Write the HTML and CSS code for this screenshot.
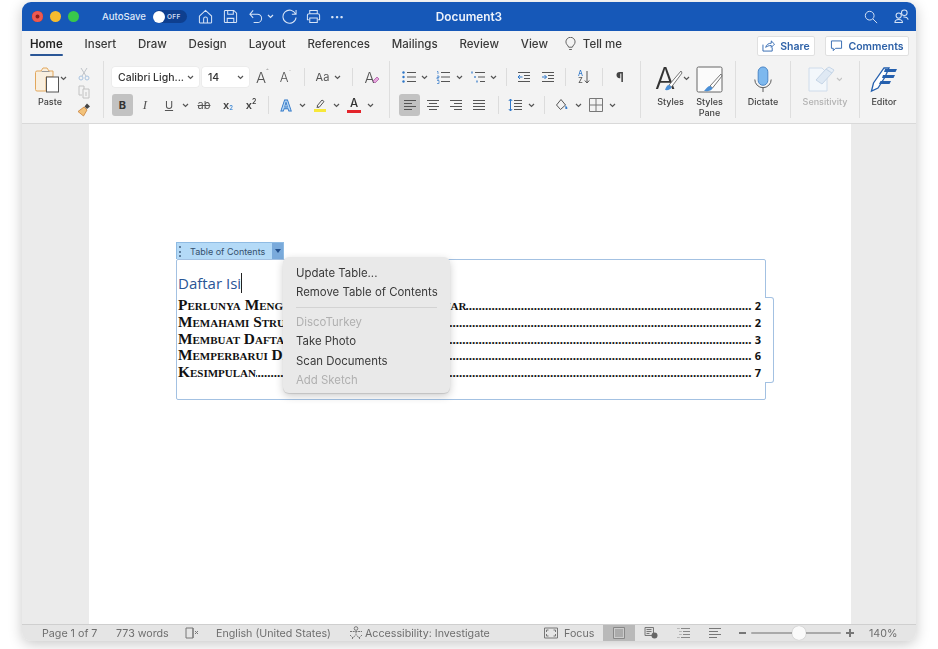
FILE: index.html
```html
<!DOCTYPE html>
<html lang="en">
<head>
<meta charset="utf-8">
<title>Document3</title>
<link rel="stylesheet" href="styles.css">
</head>
<body>
<svg class="defs" aria-hidden="true">
  <symbol id="chev" viewBox="0 0 7 5"><path d="M1 1l2.5 2.5L6 1" fill="none" stroke="#555" stroke-width="1.2"/></symbol>
  <symbol id="lines-l" viewBox="0 0 14 14"><path d="M1 2.5h12M1 5.5h8M1 8.5h12M1 11.5h8" stroke="#555" fill="none"/></symbol>
  <symbol id="lines-c" viewBox="0 0 14 14"><path d="M1 2.5h12M3 5.500h8M1 8.5h12M3 11.5h8" stroke="#555" fill="none"/></symbol>
  <symbol id="lines-r" viewBox="0 0 14 14"><path d="M1 2.5h12M5 5.5h8M1 8.5h12M5 11.5h8" stroke="#555" fill="none"/></symbol>
  <symbol id="lines-j" viewBox="0 0 14 14"><path d="M1 2.500h12M1 5.500h12M1 8.500h12M1 11.5h12" stroke="#555" fill="none"/></symbol>
</svg>
<div class="window">
  <header class="titlebar">
    <div class="lights"><i class="light red"></i><i class="light yellow"></i><i class="light green"></i></div>
    <span class="autosave">AutoSave</span>
    <span class="toggle"><i class="knob"></i><b>OFF</b></span>
    <svg class="tt t-home" viewBox="0 0 16 16"><path d="M1.500 7.500L8 1.500l6.500 6V14a1 1 0 0 1-1 1h-11a1 1 0 0 1-1-1zM6 15v-4.500a2 2 0 0 1 4 0V15"/></svg>
    <svg class="tt t-next" viewBox="0 0 16 16"><path d="M2.500 1.500h9l3 3v9a1 1 0 0 1-1 1h-11a1 1 0 0 1-1-1v-11a1 1 0 0 1 1-1zM5 1.500v4h6v-4M4.500 14.500V10h7v4.500"/></svg>
    <svg class="tt t-next" viewBox="0 0 16 16"><path d="M5.500 1.500L2 5.500l3.500 4M2 5.500h8a4.500 4.500 0 0 1 0 9H6"/></svg>
    <svg class="tchev" viewBox="0 0 7 5"><path d="M1 1l2.500 2.500L6 1"/></svg>
    <svg class="tt t-redo" viewBox="0 0 16 16"><path d="M14.500 5.500A7 7 0 1 0 15 9M15 1v4.500h-4.500"/></svg>
    <svg class="tt t-print" viewBox="0 0 16 16"><path d="M4 5.500V1.500h8v4M3 11.500H1.500V7a2 2 0 0 1 2-2h9a2 2 0 0 1 2 2v4.500H13M4 9.500h8v5H4z"/></svg>
    <span class="more">···</span>
    <span class="doc-title">Document3</span>
    <svg class="tt t-search" viewBox="0 0 16 16"><circle cx="6.500" cy="6.500" r="5"/><path d="M10.200 10.200L15 15"/></svg>
    <svg class="tt t-people" viewBox="0 0 16 16"><circle cx="11" cy="4" r="3"/><circle cx="5" cy="7" r="2.800"/><path d="M1 14.500c0-2 2-3.200 4-3.200s4 1.200 4 3.200zM10 8.500c2.500-.3 5 .8 5 3"/></svg>
  </header>

  <nav class="tabs">
    <span class="tab active">Home</span>
    <span class="tab">Insert</span>
    <span class="tab">Draw</span>
    <span class="tab">Design</span>
    <span class="tab">Layout</span>
    <span class="tab">References</span>
    <span class="tab">Mailings</span>
    <span class="tab">Review</span>
    <span class="tab">View</span>
    <span class="tell">
      <svg class="bulb" viewBox="0 0 12 15"><path d="M4 11C3.500 9 1 8 1 5.200a5 5 0 0 1 10 0C11 8 8.500 9 8 11zM4.500 13.500h3" fill="none" stroke="#555"/></svg>
      <span class="tab">Tell me</span>
    </span>
    <span class="btn share">
      <svg class="btn-ic" viewBox="0 0 14 13"><path d="M1 5v7h10V8M4 8c.5-3 3-4.500 6-4.500V1l3.500 3.500L10 8V6C7.500 6 5.500 6.500 4 8z" fill="none" stroke="#2f66b0"/></svg>Share</span>
    <span class="btn comments">
      <svg class="btn-ic" viewBox="0 0 14 13"><path d="M1.500 1h11v8H6L3.500 11.500V9h-2z" fill="none" stroke="#2f66b0"/></svg>Comments</span>
  </nav>

  <section class="ribbon">
    <div class="group g-paste">
      <div class="big paste-col">
        <div class="big-ic">
          <svg class="paste-ic" viewBox="0 0 26 27"><path d="M3 5h4l2-3h4l2 3h4v6H12v14H3a1.500 1.500 0 0 1-1.500-1.500V6.500A1.500 1.500 0 0 1 3 5z" fill="#f9efdf" stroke="#e2a75c"/><path d="M7.500 5.500h8" stroke="#999"/><rect x="12.500" y="11" width="12" height="15" fill="#fff" stroke="#555"/></svg>
          <svg class="chev paste-chev"><use href="#chev"/></svg>
        </div>
        <span class="big-label">Paste</span>
      </div>
      <div class="clip-col">
        <svg class="ic" viewBox="0 0 14 14"><path d="M4 1l5 8M10 1L5 9" stroke="#bfc3c9" fill="none"/><circle cx="4" cy="11" r="2" stroke="#a9c3e0" fill="none"/><circle cx="10" cy="11" r="2" stroke="#a9c3e0" fill="none"/></svg>
        <svg class="ic" viewBox="0 0 14 14"><path d="M2 1h5v3M2 1v9h3M6 4h6v9H6z" stroke="#c2c2c2" fill="none"/><path d="M8 8h2M8 10h2" stroke="#c2c2c2"/></svg>
        <svg class="ic" viewBox="0 0 14 14"><path d="M10 .5l3 3-3 2.500-2.500-2.500z" fill="#444"/><path d="M7 4l3 3-3.500 6L1 8.500z" fill="#f2c27a" stroke="#c9803a" stroke-width=".8"/></svg>
      </div>
    </div>

    <div class="group g-font">
      <div class="row">
        <span class="select sel-font"><span>Calibri Ligh...</span><svg class="chev"><use href="#chev"/></svg></span>
        <span class="select sel-size m3"><span>14</span><svg class="chev"><use href="#chev"/></svg></span>
        <span class="glyph g-grow m6">A<sup>ˆ</sup></span>
        <span class="glyph g-shrink m8">A<sup>ˇ</sup></span>
        <i class="sep m11"></i>
        <span class="glyph g-aa m10">Aa</span>
        <svg class="chev m4"><use href="#chev"/></svg>
        <i class="sep m11"></i>
        <span class="glyph g-clear m10">A<svg class="eraser" viewBox="0 0 8 8"><path d="M1 5l4-4 2 2-4 4z" fill="#e6a9dd" stroke="#a84ea0" stroke-width=".7"/></svg></span>
      </div>
      <div class="row row2">
        <span class="pressed bold-btn">B</span>
        <span class="glyph g-i m5">I</span>
        <span class="glyph g-u m10">U</span>
        <svg class="chev m6"><use href="#chev"/></svg>
        <span class="glyph g-strike m8">ab</span>
        <span class="glyph g-x m10">x<sub>2</sub></span>
        <span class="glyph g-x m9">x<sup>2</sup></span>
        <i class="sep m10"></i>
        <span class="glyph g-effect m10">A</span>
        <svg class="chev m6"><use href="#chev"/></svg>
        <svg class="ic m7" viewBox="0 0 14 14"><path d="M4 8l5-6 2 1.500L6 9.500z" fill="none" stroke="#555"/><path d="M3.500 10l.5-2 2 1.500z" fill="#555"/><rect x="1" y="11" width="12" height="3" fill="#f7e83a"/></svg>
        <svg class="chev m6"><use href="#chev"/></svg>
        <span class="glyph g-color m7">A</span>
        <svg class="chev m6"><use href="#chev"/></svg>
      </div>
    </div>

    <div class="group g-para">
      <div class="row">
        <svg class="ic m3" viewBox="0 0 14 14"><path d="M5 2.500h9M5 7h9M5 11.500h9" stroke="#555"/><circle cx="1.500" cy="2.500" r="1.200" fill="#2f77c8"/><circle cx="1.500" cy="7" r="1.200" fill="#2f77c8"/><circle cx="1.500" cy="11.500" r="1.200" fill="#2f77c8"/></svg>
        <svg class="chev m5"><use href="#chev"/></svg>
        <svg class="ic m8" viewBox="0 0 14 14"><path d="M5 2.500h9M5 7h9M5 11.500h9" stroke="#555"/><path d="M1 1.500h1v2.500M1 6h2v1.500H1v1.500h2M1 10.500h2v3H1" stroke="#2f77c8" fill="none" stroke-width=".7"/></svg>
        <svg class="chev m6"><use href="#chev"/></svg>
        <svg class="ic m8" viewBox="0 0 14 14"><path d="M4 2.500h10M7 7h7M9 11.500h5" stroke="#555"/><path d="M1 1.500v2M4 6v2M6 10.500v2" stroke="#2f77c8" stroke-width="1.200"/></svg>
        <svg class="chev m5"><use href="#chev"/></svg>
        <i class="sep m9"></i>
        <svg class="ic m10" viewBox="0 0 14 14"><path d="M1 2.500h12M7 5.500h6M7 8.500h6M1 11.500h12" stroke="#555"/><path d="M5.500 7H1M3 5L1 7l2 2" stroke="#2f77c8" fill="none"/></svg>
        <svg class="ic m10" viewBox="0 0 14 14"><path d="M1 2.500h12M7 5.500h6M7 8.500h6M1 11.500h12" stroke="#555"/><path d="M1 7h4.500M3.500 5l2 2-2 2" stroke="#2f77c8" fill="none"/></svg>
        <i class="sep m10"></i>
        <span class="glyph g-sort m11"><span class="az"><span>A</span><span>Z</span></span><svg class="arrow" viewBox="0 0 6 14"><path d="M3 1v12M.8 10.500L3 13l2.200-2.500" stroke="#555" fill="none"/></svg></span>
        <i class="sep m11"></i>
        <span class="glyph g-pil m10">¶</span>
      </div>
      <div class="row row2">
        <span class="pressed"><svg class="ic"><use href="#lines-l"/></svg></span>
        <svg class="ic m6"><use href="#lines-c"/></svg>
        <svg class="ic m9"><use href="#lines-r"/></svg>
        <svg class="ic m9"><use href="#lines-j"/></svg>
        <i class="sep m12"></i>
        <svg class="ic m9" viewBox="0 0 14 14"><path d="M6 2.500h8M6 5.500h8M6 8.500h8M6 11.500h8" stroke="#555"/><path d="M2.500 1v12M.8 3L2.500 1l1.700 2M.8 11l1.700 2 1.700-2" stroke="#2f77c8" fill="none"/></svg>
        <svg class="chev m6"><use href="#chev"/></svg>
        <i class="sep m9"></i>
        <svg class="ic m10" viewBox="0 0 14 14"><path d="M6 1.500L1.500 7l4 4.500L10.500 7z" fill="none" stroke="#555"/><path d="M10.500 7l2 3a1.200 1.200 0 0 1-2.200.5z" fill="#2f77c8"/></svg>
        <svg class="chev m6"><use href="#chev"/></svg>
        <svg class="ic m7" viewBox="0 0 14 14"><path d="M.5.500h13v13H.5zM7 .5v13M.5 7h13" stroke="#777" fill="none"/></svg>
        <svg class="chev m6"><use href="#chev"/></svg>
      </div>
    </div>

    <div class="group g-styles">
      <div class="big col-styles">
        <div class="big-ic">
          <svg class="styles-ic" viewBox="0 0 28 27"><text x="0" y="23" class="styles-a">A</text><path d="M26 5L14 19l2.500 2L27 7z" fill="#fff" stroke="#666" stroke-width=".9"/><path d="M14 19c-2 0-3 2-4 5 3 .5 6-.5 6.500-3z" fill="#4a8fd6"/></svg>
          <svg class="chev styles-chev"><use href="#chev"/></svg>
        </div>
        <span class="big-label">Styles</span>
      </div>
      <div class="big col-pane">
        <div class="big-ic">
          <svg class="pane-ic" viewBox="0 0 27 27"><rect x="1" y="1" width="25" height="25" rx="1.500" fill="#fbfbfb" stroke="#666"/><path d="M25 8L14 20l2.500 2L26 10z" fill="#fff" stroke="#666" stroke-width=".9"/><path d="M14 20c-2 0-3 1.500-6 5 3 .5 8 0 8.500-3z" fill="#4a8fd6"/></svg>
        </div>
        <span class="big-label">Styles<br>Pane</span>
      </div>
    </div>

    <div class="group g-dictate">
      <div class="big">
        <div class="big-ic">
          <svg class="mic-ic" viewBox="0 0 20 28"><rect x="5" y="1" width="10" height="19" rx="5" fill="#7db8ee" stroke="#4682c4"/><path d="M1.500 14a8.500 8.500 0 0 0 17 0M10 22.500V27" fill="none" stroke="#555"/></svg>
        </div>
        <span class="big-label">Dictate</span>
      </div>
    </div>

    <div class="group g-sens">
      <div class="big">
        <div class="big-ic">
          <svg class="sens-ic" viewBox="0 0 34 26"><path d="M1 2h13l5 5v18H1z" fill="#f3f7fb" stroke="#cfdceb"/><path d="M8 14L18 3l6 4-10 11z" fill="#dfe9f4" stroke="#c6d5e6"/><path d="M18 3l3-2 5 3-2 3z" fill="#e8eff7" stroke="#c6d5e6"/><path d="M29 12l2.500 2.500L34 12" fill="none" stroke="#c4c4c4" stroke-width="1.200"/></svg>
        </div>
        <span class="big-label muted">Sensitivity</span>
      </div>
    </div>

    <div class="group g-editor">
      <div class="big">
        <div class="big-ic">
          <svg class="editor-ic" viewBox="0 0 28 27"><path d="M1.500 25l2-8L14 2h5l-4 9-7 11z" fill="#fff" stroke="#2560ae" stroke-width="1.300"/><path d="M15 3h12l-1.500 3H14zM13 9h12l-1.500 3H12zM10.500 15H21l-1.500 3H9z" fill="#2560ae"/></svg>
        </div>
        <span class="big-label">Editor</span>
      </div>
    </div>
  </section>

  <main class="docarea">
    <article class="page">
      <div class="toc">
        <div class="toc-tab">
          <span class="grip"></span>
          <span class="toc-name">Table of Contents</span>
          <span class="toc-drop"><i></i></span>
        </div>
        <div class="toc-box">
          <span class="toc-bump"></span>
          <h1 class="toc-heading">Daftar Isi<i class="caret"></i></h1>
          <div class="toc-line"><span class="toc-t">Perlunya Mengenal Daftar Isi yang Benar</span><span class="dots">......................................................................................................................................................................................</span><span class="toc-p">2</span></div>
          <div class="toc-line"><span class="toc-t">Memahami Struktur Daftar Isi</span><span class="dots">......................................................................................................................................................................................</span><span class="toc-p">2</span></div>
          <div class="toc-line"><span class="toc-t">Membuat Daftar Isi</span><span class="dots">......................................................................................................................................................................................</span><span class="toc-p">3</span></div>
          <div class="toc-line"><span class="toc-t">Memperbarui Daftar Isi</span><span class="dots">......................................................................................................................................................................................</span><span class="toc-p">6</span></div>
          <div class="toc-line"><span class="toc-t">Kesimpulan</span><span class="dots">......................................................................................................................................................................................</span><span class="toc-p">7</span></div>
        </div>
        <div class="menu">
          <div class="mi">Update Table...</div>
          <div class="mi">Remove Table of Contents</div>
          <hr class="menu-sep">
          <div class="mi off">DiscoTurkey</div>
          <div class="mi">Take Photo</div>
          <div class="mi">Scan Documents</div>
          <div class="mi off">Add Sketch</div>
        </div>
      </div>
    </article>
  </main>

  <footer class="status">
    <span class="s-page">Page 1 of 7</span>
    <span class="s-words">773 words</span>
    <svg class="s-ic s-book" viewBox="0 0 14 12"><path d="M1 1h7v10H1zM8 1v10M10 4l3 3M13 4l-3 3" fill="none" stroke="#777"/></svg>
    <span class="s-lang">English (United States)</span>
    <svg class="s-ic s-acc" viewBox="0 0 14 14"><circle cx="7" cy="2.500" r="1.800" fill="none" stroke="#777"/><path d="M1 5.500h12M7 5.500v3M3 13l4-4.500 4 4.500M1 9l3 3M13 9l-3 3" fill="none" stroke="#777" stroke-dasharray="2 .7"/></svg>
    <span class="s-acc-t">Accessibility: Investigate</span>
    <svg class="s-ic s-focus" viewBox="0 0 14 12"><path d="M.5 1h13v10H.5z" fill="none" stroke="#777"/><path d="M2.500 5V3h2M9.500 3h2v2M11.500 7v2h-2M4.500 9h-2V7" fill="none" stroke="#777"/></svg>
    <span class="s-focus-t">Focus</span>
    <span class="s-view"><svg class="s-ic" viewBox="0 0 14 12"><path d="M1.500.5h11v11h-11z" fill="#ccc" stroke="#888"/><path d="M3 3h8M3 5h8M3 7h8M3 9h8" stroke="#8a8a8a"/></svg></span>
    <svg class="s-ic s-web" viewBox="0 0 14 12"><path d="M1 .5h8.500v8H1z" fill="#ddd" stroke="#777"/><path d="M2.500 2.500h5M2.500 4.500h5M2.500 6.500h3" stroke="#777"/><circle cx="10.500" cy="8.500" r="3" fill="#666"/></svg>
    <svg class="s-ic s-out" viewBox="0 0 14 12"><path d="M4 1.500h9M6 4.500h7M6 7.500h7M4 10.500h9" stroke="#888"/><path d="M.5 1.500h2M2.500 4.500h2M2.500 7.500h2M.5 10.500h2" stroke="#888" stroke-dasharray="1 .6"/></svg>
    <svg class="s-ic s-draft" viewBox="0 0 14 12"><path d="M1 1.500h12M1 4.500h9M1 7.500h12M1 10.500h8" stroke="#777"/></svg>
    <span class="s-minus"></span>
    <span class="slider"><i class="thumb"></i></span>
    <span class="s-plus"></span>
    <span class="s-zoom">140%</span>
  </footer>
</div>
</body>
</html>
```
FILE: styles.css
```css
* { box-sizing: border-box; }
html, body { margin: 0; height: 100%; }
body {
  width: 938px; height: 649px; overflow: hidden; background: #fff;
  padding: 2px 22px 0;
  font-family: Inter, "Liberation Sans", sans-serif; color: #333;
}
.defs { display: none; }
.window {
  width: 894px; height: 639px; display: flex; flex-direction: column;
  border-radius: 9px; overflow: hidden; background: #f3f3f3;
  box-shadow: 0 3px 14px rgba(0,0,0,.22); filter: blur(.35px);
}

/* title bar */
.titlebar {
  height: 29px; flex: none; background: #1658b8; color: #fff;
  display: flex; align-items: center; padding-left: 10px;
}
.titlebar > * { flex: none; }
.lights { display: flex; gap: 7px; width: 70px; }
.light { width: 11px; height: 11px; border-radius: 50%; display: block; }
.red { background: #ec5a52; box-shadow: inset 0 0 0 3.5px #ec5a52, inset 0 0 0 6px #8c1f1a; }
.yellow { background: #f5bb2f; }
.green { background: #38c84b; }
.autosave { font-size: 9.600px; font-weight: 500; color: #dfe9f8; width: 51px; white-space: nowrap; }
.toggle {
  width: 34px; height: 13px; border-radius: 7px; background: #0e3f8f;
  display: flex; align-items: center; gap: 2px; font-size: 6.5px; letter-spacing: .3px; color: #cfdcf2;
}
.toggle b { font-weight: 600; }
.knob { width: 12px; height: 12px; border-radius: 50%; background: #fff; display: block; }
.tt { width: 15px; height: 15px; fill: none; stroke: #d7e4f6; stroke-width: 1.1; }
.t-home { margin-left: 11px; }
.t-next { margin-left: 10px; }
.tchev { width: 7px; height: 5px; margin-left: 4px; fill: none; stroke: #d7e4f6; stroke-width: 1.2; }
.t-redo { margin-left: 8px; }
.t-print { margin-left: 9px; }
.more { margin-left: 9px; font-size: 14px; font-weight: 700; color: #d7e4f6; width: 13px; letter-spacing: 0; }
.doc-title { margin-left: 92px; width: 68px; text-align: center; font-size: 11.800px; font-weight: 600; white-space: nowrap; color: #eef3fb; }
.t-search { margin-left: 361px; width: 14px; height: 14px; }
.t-people { margin-left: 16px; }

/* tabs */
.tabs {
  height: 29px; flex: none; display: flex; align-items: center; gap: 21.850px;
  padding: 0 7px 0 8px; background: #f3f3f3;
}
.tab { font-size: 11.500px; font-weight: 500; color: #3a3a3a; white-space: nowrap; position: relative; top: -2px; }
.tab.active { font-weight: 600; color: #222; }
.tab.active::after {
  content: ""; position: absolute; left: 0; right: 0; bottom: -5px; height: 2px;
  border-radius: 1px; background: #2a5696;
}
.tell { display: flex; align-items: center; gap: 7px; margin-left: -5px; }
.bulb { width: 11px; height: 14px; position: relative; top: -2px; }
.btn {
  height: 20px; display: flex; align-items: center; justify-content: center; gap: 5px;
  background: #fff; border: 1px solid #e0e0e0; border-radius: 2px;
  font-size: 10.500px; font-weight: 600; color: #2f62a8; margin-top: 1px;
}
.btn-ic { width: 13px; height: 12px; }
.share { width: 58px; margin-left: auto; }
.comments { width: 84px; margin-left: -11.850px; }

/* ribbon */
.ribbon {
  height: 64px; flex: none; display: flex; background: #f3f3f3;
  border-bottom: 1px solid #d9d9d9; padding-bottom: 6px;
}
.group { border-right: 1px solid #dedede; height: 57px; flex: none; margin-top: 1px; }
.g-paste { width: 82px; padding-left: 8px; display: flex; }
.g-font { width: 286px; padding: 6px 0 0 8px; }
.g-para { width: 251px; padding: 6px 0 0 9px; }
.g-styles { width: 95px; padding-left: 9px; display: flex; }
.g-dictate { width: 55px; display: flex; justify-content: center; }
.g-sens { width: 69px; display: flex; justify-content: center; }
.g-editor { width: 48px; border-right: 0; display: flex; justify-content: center; }
.big { display: flex; flex-direction: column; align-items: center; padding-top: 5px; }
.big-ic { height: 27px; display: flex; position: relative; }
.big-label { margin-top: 3px; font-size: 9px; line-height: 11px; font-weight: 500; color: #444; text-align: center; white-space: nowrap; }
.big-label.muted { color: #b2b2b2; }
.paste-col { width: 40px; }
.paste-ic { width: 26px; height: 27px; margin-left: -7px; }
.paste-chev { position: absolute; right: -7px; top: 10px; }
.clip-col { margin-left: 7px; padding-top: 6px; width: 14px; display: flex; flex-direction: column; gap: 4px; }
.row { display: flex; align-items: center; height: 20px; }
.row2 { height: 22px; margin-top: 7px; }
.ic { width: 14px; height: 14px; flex: none; display: block; }
.chev { width: 7px; height: 5px; flex: none; display: block; }
.sep { width: 1px; height: 18px; background: #dcdcdc; flex: none; display: block; }
.select {
  height: 20px; background: #fff; border-radius: 3px; display: flex; align-items: center; justify-content: space-between;
  padding: 0 5px 0 6px; font-size: 10.500px; font-weight: 500; color: #333; flex: none; white-space: nowrap;
  box-shadow: 0 0 0 .5px #e6e6e6;
}
.sel-font { width: 87px; }
.sel-size { width: 47px; }
.glyph { display: flex; align-items: center; justify-content: center; width: 14px; flex: none; font-size: 12px; color: #555; position: relative; }
.glyph sup { font-size: 7px; line-height: 1; align-self: flex-start; }
.glyph sub { font-size: 6px; line-height: 1; align-self: flex-end; color: #4a8fd6; margin-bottom: 1px; }
.g-grow { width: 15px; font-size: 15px; font-weight: 300; }
.g-shrink { width: 15px; font-size: 13px; font-weight: 300; }
.g-aa { width: 15px; font-size: 11px; }
.g-clear { width: 15px; font-size: 15px; font-weight: 300; }
.eraser { width: 8px; height: 8px; align-self: flex-end; margin: 0 -3px 3px -3px; }
.pressed { width: 21px; height: 22px; background: #c2c2c2; border-radius: 3px; display: flex; align-items: center; justify-content: center; flex: none; }
.bold-btn { font-size: 11px; font-weight: 700; color: #333; }
.g-i { font-family: "Liberation Serif", serif; font-style: italic; font-size: 13px; }
.g-u { font-size: 11px; text-decoration: underline; }
.g-strike { font-size: 11px; text-decoration: line-through; }
.g-x { font-size: 11px; font-weight: 600; color: #444; }
.g-effect { font-size: 15px; font-weight: 700; color: #b9d8f5; -webkit-text-stroke: .8px #2f77c8; }
.g-color { font-size: 11.500px; font-weight: 500; color: #333; height: 16px; border-bottom: 3px solid #e3242b; line-height: 12px; align-items: flex-start; }
.g-sort { width: 14px; height: 14px; gap: 1px; }
.az { display: flex; flex-direction: column; font-size: 7px; line-height: 7px; font-weight: 500; align-items: center; }
.az span:first-child { color: #2f77c8; }
.arrow { width: 6px; height: 14px; }
.g-pil { font-size: 13px; font-weight: 700; color: #444; }
.col-styles { width: 41px; }
.styles-ic { width: 28px; height: 27px; margin-left: -3px; }
.styles-a { font: 300 30px Inter, sans-serif; fill: #333; }
.styles-chev { position: absolute; right: -7px; top: 10px; }
.col-pane { width: 37px; }
.pane-ic { width: 27px; height: 27px; }
.mic-ic { width: 20px; height: 27px; }
.sens-ic { width: 34px; height: 26px; }
.editor-ic { width: 28px; height: 27px; }
.m3 { margin-left: 3px; } .m4 { margin-left: 4px; } .m5 { margin-left: 5px; } .m6 { margin-left: 6px; }
.m7 { margin-left: 7px; } .m8 { margin-left: 8px; } .m9 { margin-left: 9px; } .m10 { margin-left: 10px; }
.m11 { margin-left: 11px; } .m12 { margin-left: 12px; }

/* document */
.docarea { flex: 1; min-height: 0; display: flex; background: #ebebeb; padding: 0 65px 0 67px; }
.page { flex: 1; background: #fff; padding: 118px 0 0 87px; }
.toc { width: 590px; position: relative; }
.toc-tab {
  width: 108px; height: 17px; display: flex; align-items: center; background: #b4daf7;
  border: 1px solid #8fbbe3; border-bottom: 0; font-size: 9px; font-weight: 400; color: #35506e;
}
.grip { width: 2px; height: 11px; margin-left: 2px; border-left: 2px dotted #5f7f9e; }
.toc-name { margin-left: 9px; flex: 1; white-space: nowrap; }
.toc-drop { width: 11px; height: 16px; background: #7aaadb; display: flex; align-items: center; justify-content: center; }
.toc-drop i { border: 3px solid transparent; border-top: 4px solid #23508c; border-bottom: 0; display: block; }
.toc-box {
  height: 141px; border: 1px solid #a3c1e2; border-radius: 2px; padding: 10px 4px 0 1px; position: relative; background: #fff;
}
.toc-bump {
  position: absolute; right: -9px; top: 37px; width: 9px; height: 86px; background: #fff;
  border: 1px solid #a3c1e2; border-left: 0; border-radius: 0 3px 3px 0;
}
.toc-heading {
  margin: 0; height: 26px; font: 500 15px/26px "Open Sans", sans-serif; color: #2a5596; display: flex; align-items: center;
}
.caret { width: 1px; height: 20px; background: #222; display: block; margin-left: 0; }
.toc-line {
  display: flex; align-items: baseline; height: 16.750px; font: 700 13px/17px "Liberation Serif", serif; color: #111;
}
.toc-t { font-size: 15.400px; font-variant: small-caps; white-space: nowrap; flex: none; }
.dots { flex: 1; min-width: 0; overflow: hidden; white-space: nowrap; display: flex; justify-content: flex-end; }
.toc-p { width: 9.500px; text-align: right; font: 700 11px/17px "Open Sans", sans-serif; }
.menu {
  position: absolute; left: 107px; top: 15px; width: 167px; height: 136px; padding: 6.500px 0 0 13px;
  background: #e9e9e9; border-radius: 6px; box-shadow: 0 1px 1px rgba(0,0,0,.12), 0 3px 9px rgba(0,0,0,.2); z-index: 2;
}
.mi { height: 19.600px; font-size: 11.400px; line-height: 19.600px; color: #3a3a3a; white-space: nowrap; }
.mi.off { color: #b0b0b0; }
.menu-sep { border: 0; height: 1px; background: #d3d3d3; margin: 4px 13px 5px 0; }

/* status */
.status {
  height: 17px; flex: none; display: flex; align-items: center; background: #e5e5e5; border-top: 1px solid #cfcfcf;
  font-size: 10.700px; color: #6e6e6e; white-space: nowrap; padding-left: 20px;
}
.s-ic { width: 14px; height: 12px; flex: none; display: block; }
.s-page { width: 74px; }
.s-words { width: 69px; }
.s-lang { margin-left: 17px; width: 133px; }
.s-acc { height: 14px; }
.s-acc-t { margin-left: 2px; width: 179px; }
.s-focus-t { margin-left: 6px; width: 39px; }
.s-view { width: 32px; height: 16px; background: #b9b9b9; display: flex; align-items: center; justify-content: center; flex: none; }
.s-web { margin-left: 9px; }
.s-out { margin-left: 19px; }
.s-draft { margin-left: 17px; }
.s-minus { width: 7px; height: 2px; background: #777; margin-left: 17px; }
.slider { width: 90px; height: 2px; background: #a9a9a9; margin-left: 5px; position: relative; border-radius: 1px; }
.thumb { position: absolute; left: 41px; top: -6px; width: 14px; height: 14px; border-radius: 50%; background: #fafafa; box-shadow: 0 0 1px rgba(0,0,0,.3); }
.s-plus { width: 8px; height: 8px; margin-left: 5px; background: linear-gradient(#777,#777) center/8px 2px no-repeat, linear-gradient(#777,#777) center/2px 8px no-repeat; }
.s-zoom { margin-left: 15px; }
```
